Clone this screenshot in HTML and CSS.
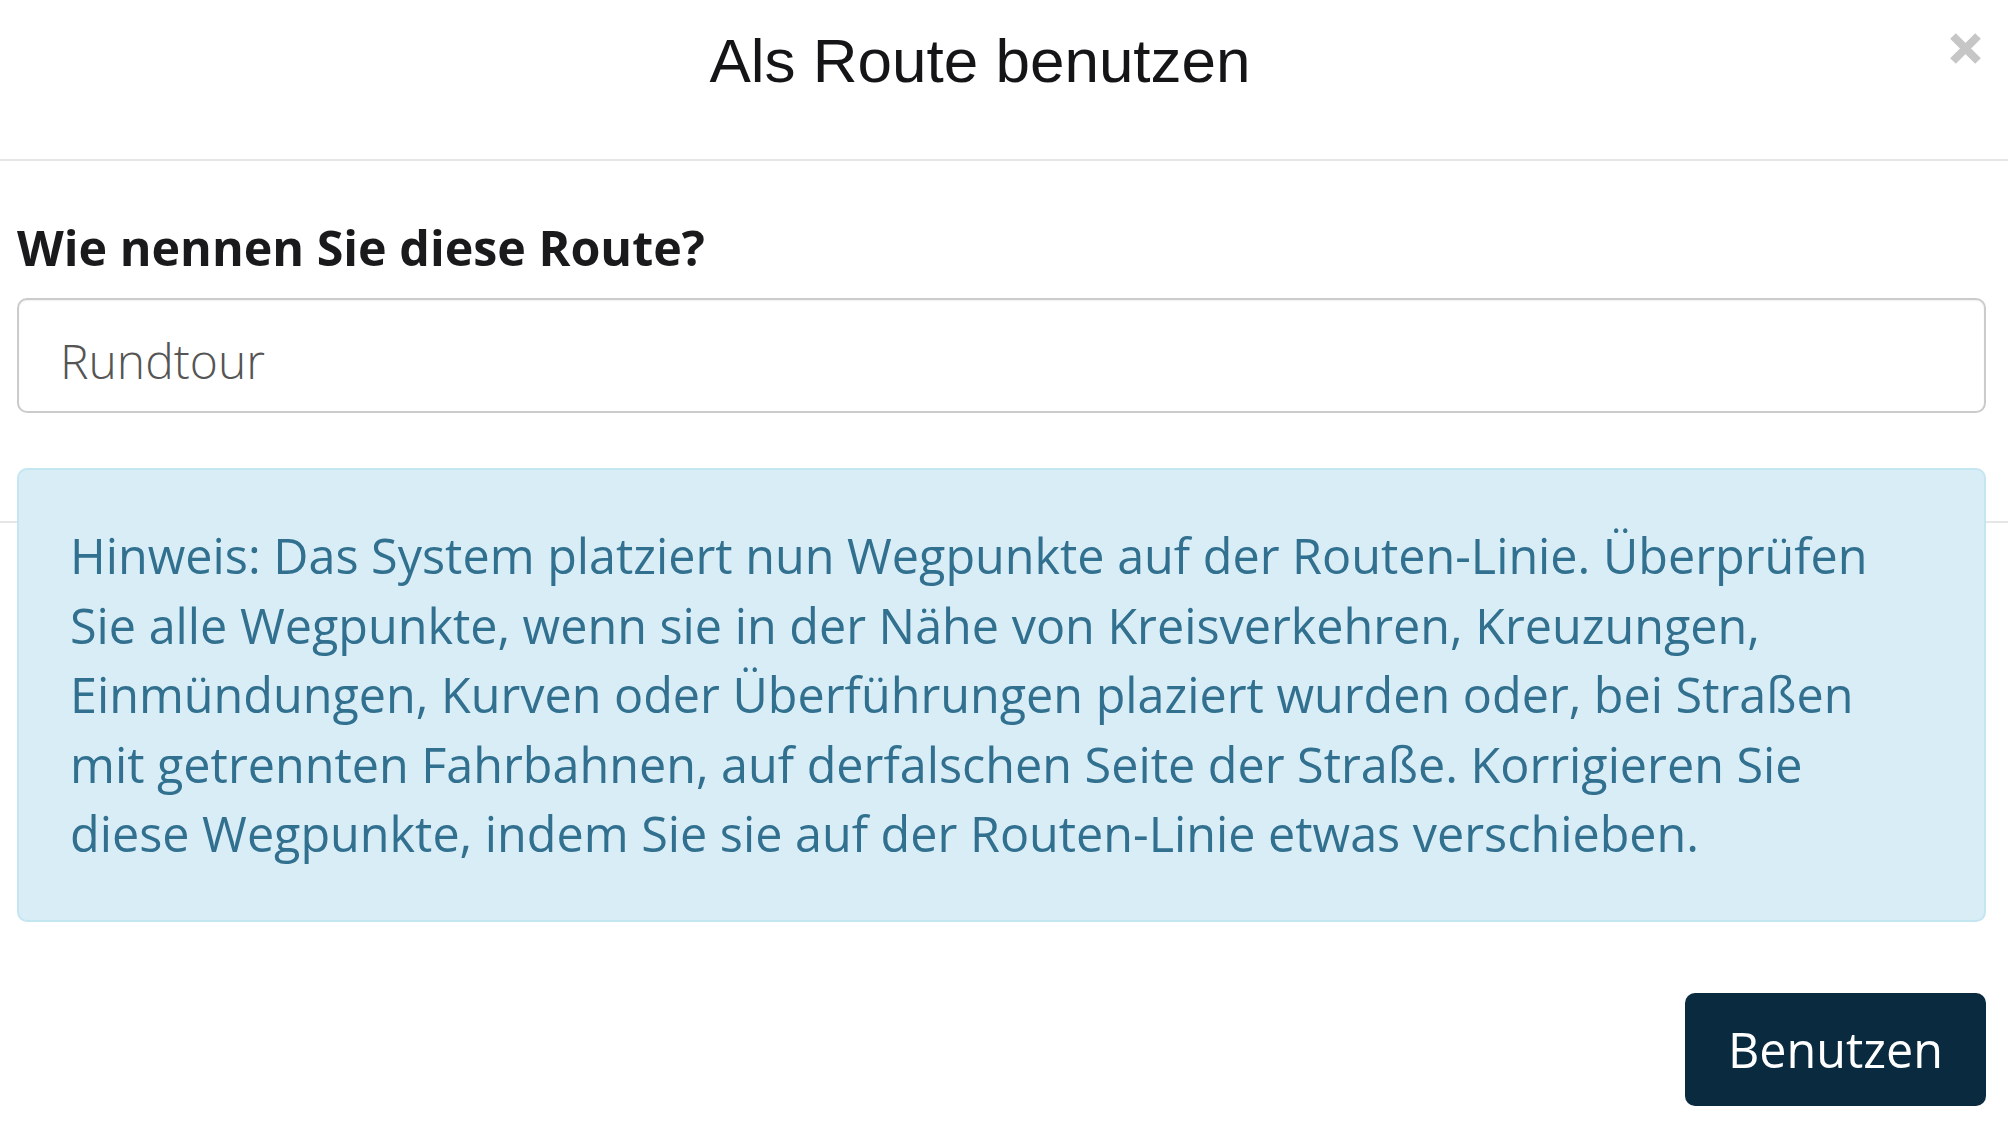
FILE: index.html
```html
<!DOCTYPE html>
<html lang="de">
<head>
  <meta charset="UTF-8" />
  <meta name="viewport" content="width=device-width, initial-scale=1.0"/>
  <title>Als Route benutzen</title>
  <link rel="stylesheet" href="styles.css">
</head>
<body>
  <div class="modal">
    <div class="modal-header">
      <h1 class="modal-title">Als Route benutzen</h1>
      <button type="button" class="close" aria-label="Schließen">
        <svg width="33" height="33" viewBox="0 0 33 33">
          <path d="M4 4 L29 29 M29 4 L4 29" stroke="#c6c6c6" stroke-width="8" stroke-linecap="butt"/>
        </svg>
      </button>
    </div>

    <div class="modal-body">
      <label for="route-name">Wie nennen Sie diese Route?</label>
      <input type="text" id="route-name" placeholder="Rundtour" />

      <div class="divider"></div>

      <!-- Hinweis -->
      <div class="alert-info">
        Hinweis: Das System platziert nun Wegpunkte auf der Routen-Linie. Überprüfen Sie alle Wegpunkte, wenn sie in der Nähe von Kreisverkehren, Kreuzungen, Einmündungen, Kurven oder Überführungen plaziert wurden oder, bei Straßen mit getrennten Fahrbahnen, auf derfalschen Seite der Straße. Korrigieren Sie diese Wegpunkte, indem Sie sie auf der Routen-Linie etwas verschieben.
      </div>
    </div>

    <div class="modal-footer">
      <button type="button" class="btn-primary">Benutzen</button>
    </div>
  </div>
</body>
</html>
```

FILE: styles.css
```css
body {
  margin: 0;
  padding: 0;
  background-color: #fff;
  font-family: 'Open Sans', 'Liberation Sans', sans-serif;
  color: #1b1b1d;
}

.modal-header {
  display: flex;
  align-items: flex-start;
  padding: 30px 26px 67px 17px;
  border-bottom: 2px solid #e6e6e6;
}

.modal-title {
  flex: 1;
  margin: 0;
  text-align: center;
  font-family: 'Liberation Sans', Arial, sans-serif;
  font-weight: 400;
  font-size: 62px;
  line-height: 62px;
  color: #151518;
}

.close {
  width: 33px;
  height: 33px;
  margin: 2px 0 0 6px;
  padding: 0;
  border: none;
  background: none;
  cursor: pointer;
}

.close svg {
  display: block;
}

.modal-body {
  padding: 0 22px 0 17px;
}

label {
  display: block;
  margin-top: 57px;
  font-weight: 700;
  font-size: 48.4px;
  line-height: 58px;
  color: #1a1a1c;
}

input {
  display: block;
  box-sizing: border-box;
  width: 100%;
  height: 115px;
  margin-top: 22px;
  padding: 9px 38px 0 41px;
  border: 2px solid #cbcbcb;
  border-radius: 10px;
  box-shadow: inset 0 1px 2px rgba(0, 0, 0, 0.06);
  font-family: 'Open Sans', sans-serif;
  font-weight: 300;
  font-size: 48px;
  color: #555;
}

input::placeholder {
  color: #555;
  opacity: 1;
}

.divider {
  margin: 108px -22px 0 -17px;
  border-top: 2px solid #e6e6e6;
}

.alert-info {
  margin-top: -55px;
  padding: 51px 84px 51px 51px;
  background-color: #d9edf7;
  border: 2px solid #c3e6f1;
  border-radius: 10px;
  color: #31708f;
  font-size: 48.5px;
  line-height: 69.5px;
}

.modal-footer {
  display: flex;
  justify-content: flex-end;
  padding: 71px 22px 0 17px;
}

.btn-primary {
  width: 301px;
  height: 113px;
  border: none;
  border-radius: 10px;
  background-color: #0a2a3f;
  color: #fff;
  font-family: 'Open Sans', sans-serif;
  font-size: 48.5px;
  cursor: pointer;
}
```
